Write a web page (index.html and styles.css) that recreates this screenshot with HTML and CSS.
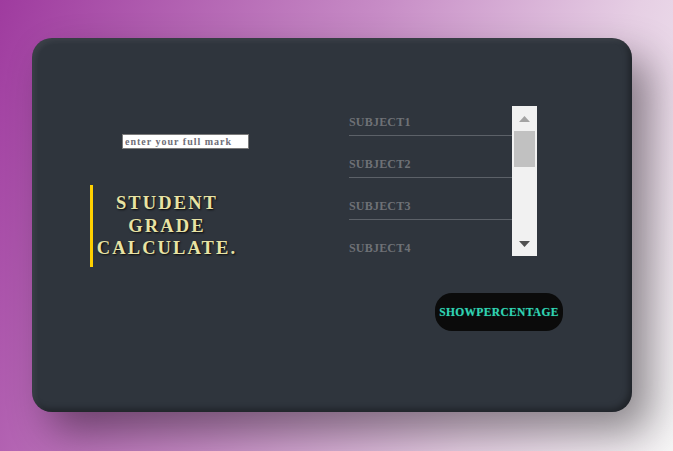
FILE: index.html
```html
<!DOCTYPE html>
<html lang="en">
<head>
<meta charset="utf-8">
<title>Student Grade Calculate</title>
<link rel="stylesheet" href="styles.css">
</head>
<body>
  <main class="card">
    <section class="left">
      <input class="full-mark" type="text" placeholder="enter your full mark">
      <h1 class="title">STUDENT<br>GRADE<br>CALCULATE.</h1>
    </section>
    <section class="right">
      <div class="list-box">
        <div class="list">
          <input class="subject" type="text" placeholder="SUBJECT1">
          <input class="subject" type="text" placeholder="SUBJECT2">
          <input class="subject" type="text" placeholder="SUBJECT3">
          <input class="subject" type="text" placeholder="SUBJECT4">
          <input class="subject" type="text" placeholder="SUBJECT5">
        </div>
        <div class="scrollbar" aria-hidden="true">
          <div class="sb-btn">
            <svg width="11" height="6" viewBox="0 0 11 6"><polygon points="0,6 11,6 5.5,0" fill="#a3a3a3"/></svg>
          </div>
          <div class="sb-track"><div class="sb-thumb"></div></div>
          <div class="sb-btn">
            <svg width="11" height="6" viewBox="0 0 11 6"><polygon points="0,0 11,0 5.5,6" fill="#505050"/></svg>
          </div>
        </div>
      </div>
      <button class="show-btn" type="button">SHOWPERCENTAGE</button>
    </section>
  </main>
</body>
</html>
```
FILE: styles.css
```css
html, body {
  margin: 0;
  padding: 0;
}
body {
  width: 673px;
  height: 451px;
  overflow: hidden;
  box-sizing: border-box;
  padding: 38px 0 0 32px;
  background: linear-gradient(112deg, #9f3b9f 0%, #c78cc6 45%, #e6cfe4 75%, #f6f6f6 100%);
  font-family: "Liberation Serif", "Times New Roman", serif;
}
.card {
  width: 600px;
  height: 374px;
  box-sizing: border-box;
  border-radius: 20px;
  background: #2f353d;
  box-shadow: inset 3px 3px 5px rgba(255, 255, 255, 0.07),
              inset -3px -3px 6px rgba(0, 0, 0, 0.35),
              18px 20px 40px rgba(0, 0, 0, 0.42);
  display: flex;
  padding: 68px 0 0 58px;
}
.left {
  width: 259px;
  display: flex;
  flex-direction: column;
  align-items: flex-start;
  padding-top: 28px;
}
.full-mark {
  margin: 0 0 0 32px;
  width: 127px;
  height: 15px;
  box-sizing: border-box;
  border: 1px solid #7a7a7a;
  background: #fff;
  padding: 0 2px;
  font-family: "Liberation Serif", serif;
  font-weight: bold;
  font-size: 10px;
  letter-spacing: 1px;
  outline: none;
}
.full-mark::placeholder {
  color: #6f6f78;
}
.title {
  margin: 36px 0 0 0;
  width: 151px;
  box-sizing: border-box;
  border-left: 3px solid #ffd000;
  padding: 7px 0;
  text-align: center;
  font-size: 18.5px;
  line-height: 22.5px;
  letter-spacing: 2.1px;
  font-weight: bold;
  color: #e8e3a4;
  text-shadow: 1px 1px 2px rgba(0, 0, 0, 0.85);
}
.right {
  display: flex;
  flex-direction: column;
  align-items: flex-start;
}
.list-box {
  display: flex;
  width: 188px;
  height: 150px;
}
.list {
  flex: 1;
  overflow: hidden;
  display: flex;
  flex-direction: column;
  gap: 12px;
}
.subject {
  flex: none;
  width: 100%;
  height: 30px;
  box-sizing: border-box;
  margin: 0;
  padding: 4px 0 0 0;
  border: none;
  border-bottom: 1px solid #5c6168;
  background: transparent;
  font-family: "Liberation Serif", serif;
  font-weight: bold;
  font-size: 12px;
  letter-spacing: 0.2px;
  color: #ddd;
  outline: none;
}
.subject::placeholder {
  color: #6e7176;
}
.scrollbar {
  width: 25px;
  background: #f1f1f1;
  display: flex;
  flex-direction: column;
}
.sb-btn {
  height: 25px;
  display: flex;
  align-items: center;
  justify-content: center;
}
.sb-track {
  flex: 1;
  padding: 0 2px;
}
.sb-thumb {
  height: 36px;
  background: #c1c1c1;
}
.show-btn {
  margin: 37px 0 0 86px;
  width: 128px;
  height: 38px;
  padding: 0;
  border: none;
  border-radius: 17px;
  background: #0b0b0b;
  color: #2fd4b2;
  font-family: "Liberation Serif", serif;
  font-weight: bold;
  font-size: 11.5px;
  letter-spacing: 0.35px;
  text-shadow: 0 0 1px rgba(47, 212, 178, 0.5);
  cursor: pointer;
}
```
